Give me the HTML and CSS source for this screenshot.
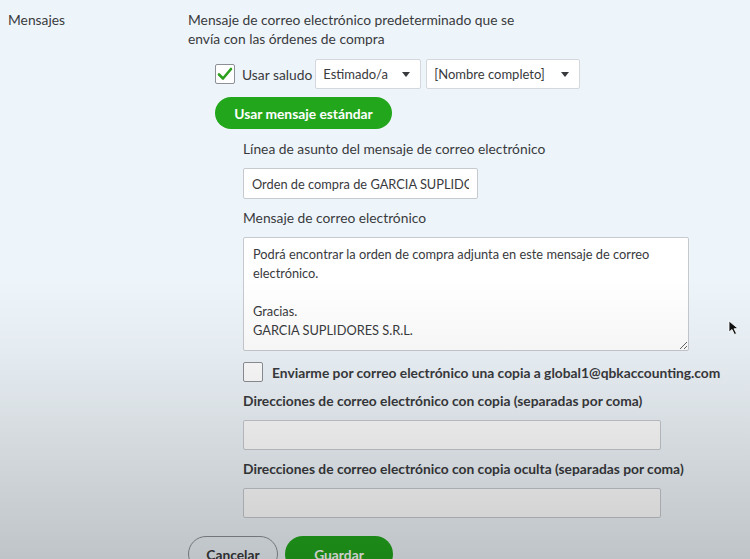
FILE: index.html
```html
<!DOCTYPE html>
<html lang="es">
<head>
    <meta charset="UTF-8">
    <meta name="viewport" content="width=device-width, initial-scale=1.0">
    <title>Mensajes</title>
    <link rel="stylesheet" href="styles.css">
</head>
<body>
    <div class="settings-row">
        <div class="row-label">Mensajes</div>
        <div class="row-content">
            <p class="intro">Mensaje de correo electrónico predeterminado que se<br>envía con las órdenes de compra</p>

            <div class="greeting-row">
                <span class="checkbox checked">
                    <svg width="16" height="14" viewBox="0 0 16 14"><path d="M2 7.5 L6 11.5 L14 2" fill="none" stroke="#2ca01c" stroke-width="2.6" stroke-linecap="round" stroke-linejoin="round"/></svg>
                </span>
                <span class="greeting-text">Usar saludo</span>
                <div class="fake-select select-short">Estimado/a <span class="caret"></span></div>
                <div class="fake-select select-long">[Nombre completo] <span class="caret"></span></div>
            </div>

            <button class="green-button standard-button">Usar mensaje estándar</button>

            <div class="message-fields">
                <label class="field-label">Línea de asunto del mensaje de correo electrónico</label>
                <input type="text" class="subject-input" value="Orden de compra de GARCIA SUPLIDORES S.R.L.">

                <label class="field-label">Mensaje de correo electrónico</label>
                <textarea class="message-body">Podrá encontrar la orden de compra adjunta en este mensaje de correo electrónico.

Gracias.
GARCIA SUPLIDORES S.R.L.</textarea>

                <div class="copy-row">
                    <span class="checkbox"></span>
                    <span class="bold-label">Enviarme por correo electrónico una copia a global1@qbkaccounting.com</span>
                </div>

                <label class="field-label bold-label">Direcciones de correo electrónico con copia (separadas por coma)</label>
                <input type="text" class="wide-input">

                <label class="field-label bold-label">Direcciones de correo electrónico con copia oculta (separadas por coma)</label>
                <input type="text" class="wide-input">
            </div>

            <div class="actions">
                <button class="outline-button">Cancelar</button>
                <button class="green-button save-button">Guardar</button>
            </div>
        </div>
    </div>

    <div class="shade"></div>

    <svg class="cursor" width="12" height="16" viewBox="0 0 12 16"><path d="M1 1 L1 12 L4 9.5 L6.5 14.5 L8.5 13.5 L6 8.8 L10 8.5 Z" fill="#111" stroke="#fff" stroke-width="0.8"/></svg>
</body>
</html>
```

FILE: styles.css
```css
body {
    font-family: Lato, "Open Sans", sans-serif;
    font-size: 13.8px;
    color: #393a3d;
    background-color: #eef5fa;
    margin: 0;
    padding: 0;
    height: 559px;
    overflow: hidden;
}

.settings-row {
    display: grid;
    grid-template-columns: 188px 1fr;
    padding-top: 10px;
}

.row-label {
    padding-left: 8px;
    line-height: 19px;
}

.intro {
    margin: 0;
    line-height: 19px;
}

.greeting-row {
    display: flex;
    align-items: center;
    margin: 11px 0 0 27px;
    height: 30px;
}

.checkbox {
    display: inline-flex;
    align-items: center;
    justify-content: center;
    width: 18px;
    height: 18px;
    border: 1px solid #8d9096;
    border-radius: 2px;
    background-color: #fff;
    flex-shrink: 0;
}

.greeting-text {
    margin: 0 3px 0 7px;
}

.fake-select {
    display: flex;
    align-items: center;
    justify-content: space-between;
    box-sizing: border-box;
    height: 30px;
    padding: 0 10px 0 7px;
    background-color: #fff;
    border: 1px solid #d4d7dc;
    border-radius: 2px;
    font-size: 13px;
}

.select-short {
    width: 106px;
}

.select-long {
    width: 154px;
    margin-left: 5px;
}

.caret {
    width: 0;
    height: 0;
    border-left: 4px solid transparent;
    border-right: 4px solid transparent;
    border-top: 5px solid #393a3d;
}

.green-button {
    background-color: #22a71c;
    color: #fff;
    border: none;
    border-radius: 18px;
    font-family: inherit;
    font-weight: bold;
    font-size: 13.8px;
    cursor: pointer;
}

.standard-button {
    display: block;
    margin: 8px 0 0 27px;
    width: 177px;
    height: 32px;
}

.message-fields {
    display: flex;
    flex-direction: column;
    align-items: flex-start;
    margin-left: 55px;
    padding-top: 10px;
}

.field-label {
    line-height: 19px;
    margin-bottom: 10px;
}

.bold-label {
    font-weight: bold;
}

input,
textarea {
    font-family: inherit;
    font-size: 13.8px;
    color: #393a3d;
    box-sizing: border-box;
    background-color: #fff;
    border: 1px solid #c6c9ce;
    border-radius: 2px;
    outline: none;
}

.subject-input {
    width: 235px;
    height: 31px;
    padding: 0 8px;
    font-size: 12.8px;
    margin-bottom: 9px;
}

.message-body {
    width: 446px;
    height: 114px;
    padding: 7px 9px;
    font-size: 12.8px;
    line-height: 19px;
    resize: both;
    margin-bottom: 10px;
}

.copy-row {
    display: flex;
    align-items: center;
    gap: 9px;
    height: 22px;
    margin-bottom: 8px;
}

.wide-input {
    width: 418px;
    height: 30px;
    margin-bottom: 9px;
}

.actions {
    display: flex;
    gap: 7px;
    margin-top: 9px;
}

.outline-button {
    width: 90px;
    height: 36px;
    background: transparent;
    border: 1px solid #8d9096;
    border-radius: 18px;
    font-family: inherit;
    font-size: 13.8px;
    font-weight: bold;
    color: #393a3d;
}

.save-button {
    width: 108px;
    height: 36px;
}

.shade {
    position: absolute;
    left: 0;
    top: 0;
    width: 100%;
    height: 559px;
    pointer-events: none;
    background: linear-gradient(to bottom, rgba(0, 0, 0, 0) 0%, rgba(0, 0, 0, 0) 50%, rgba(0, 0, 0, 0.04) 63%, rgba(0, 0, 0, 0.1) 77%, rgba(0, 0, 0, 0.2) 100%);
}

.cursor {
    position: absolute;
    left: 728px;
    top: 320px;
}
```
